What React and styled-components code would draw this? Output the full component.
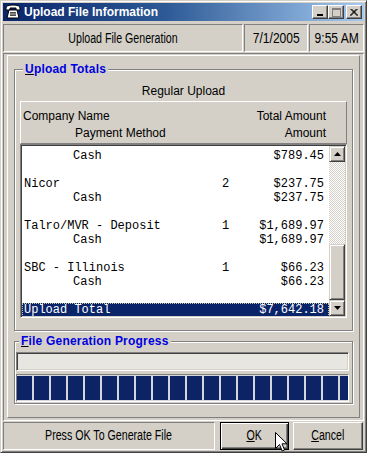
import React from "react";
import styled, { createGlobalStyle } from "styled-components";

const GlobalStyle = createGlobalStyle`
  html, body {
    margin: 0;
    padding: 0;
    background: #d4d0c8;
  }
  * {
    box-sizing: border-box;
  }
`;

const Window = styled.div`
  position: relative;
  width: 367px;
  height: 453px;
  display: flex;
  flex-direction: column;
  padding: 2px;
  background: #d4d0c8;
  border: 1px solid;
  border-color: #d4d0c8 #404040 #404040 #d4d0c8;
  box-shadow: inset 1px 1px #fff, inset -1px -1px #808080;
  font-family: "Liberation Sans", Arial, sans-serif;
  overflow: hidden;
`;

const TitleBar = styled.div`
  height: 18px;
  flex: none;
  display: flex;
  align-items: center;
  padding: 0 2px 0 2px;
  background: linear-gradient(90deg, #0a246a 0%, #2d5a96 45%, #a6caf0 100%);
  color: #fff;
`;

const TitleText = styled.span`
  margin-left: 3px;
  font-size: 12px;
  font-weight: bold;
  flex: 1;
`;

const TitleButton = styled.div`
  width: 16px;
  height: 14px;
  margin-left: ${(p) => (p.$gap ? "2px" : "0")};
  background: #d4d0c8;
  border: 1px solid;
  border-color: #fff #404040 #404040 #fff;
  box-shadow: inset -1px -1px #808080;
  display: flex;
  align-items: center;
  justify-content: center;
`;

// Arial Narrow look: the sans face squeezed sideways
const Narrow = styled.span`
  display: inline-block;
  white-space: nowrap;
  font-size: 14px;
  transform: scaleX(${(p) => p.$scale || 0.76});
`;

const HeaderRow = styled.div`
  margin-top: 3px;
  height: 28px;
  flex: none;
  display: grid;
  grid-template-columns: 240px 64px 55px;
  gap: 1px;
`;

const HeaderCell = styled.div`
  border: 1px solid;
  border-color: #808080 #fff #fff #808080;
  display: flex;
  align-items: center;
  justify-content: center;
  padding-bottom: 1px;
  color: #000;
`;

const Frame = styled.div`
  flex: 1;
  margin-top: 1px;
  display: flex;
  padding: 1px 3px 2px 3px;
  border: 1px solid;
  border-color: #808080 #fff #fff #808080;
`;

const Panel = styled.div`
  flex: 1;
  min-width: 0;
  display: flex;
  flex-direction: column;
  padding: 6px;
  border: 1px solid;
  border-color: #fff #808080 #808080 #fff;
`;

const GroupBox = styled.fieldset`
  margin: ${(p) => p.$top || "0"} 0 0 0;
  padding: ${(p) => p.$pad};
  min-width: 0;
  min-inline-size: 0;
  border: 1px solid #808080;
  box-shadow: inset 1px 1px #fff, 1px 1px #fff;
  display: flex;
  flex-direction: column;
`;

const Legend = styled.legend`
  margin-left: 3px;
  padding: 0 2px;
  background: #d4d0c8;
  color: #0000e0;
  font-size: 12px;
  font-weight: bold;
  line-height: 14px;
  letter-spacing: 0.2px;

  u {
    text-decoration-color: #000;
  }
`;

const SubTitle = styled.div`
  padding: 8px 0 3px;
  line-height: 14px;
  font-size: 12px;
  text-align: center;
  color: #000;
`;

const ColumnHeader = styled.div`
  height: 43px;
  padding: 7px 20px 0 2px;
  display: flex;
  flex-direction: column;
  gap: 3px;
  border: 1px solid;
  border-color: #fff #808080 #808080 #fff;
  font-size: 12px;
  line-height: 14px;
  color: #000;
`;

const HeaderLine = styled.div`
  display: flex;
  justify-content: space-between;
  padding-left: ${(p) => p.$indent || "0"};
`;

const ListBox = styled.div`
  height: 174px;
  display: flex;
  border: 1px solid;
  border-color: #808080 #fff #fff #808080;
  box-shadow: inset 1px 1px #404040, inset -1px -1px #d4d0c8;
  padding: 1px;
  background: #fff;
`;

const ListBody = styled.div`
  flex: 1;
  min-width: 0;
  padding-top: 3px;
  overflow: hidden;
  font-family: "Liberation Mono", "Courier New", monospace;
  font-size: 12px;
  color: #000;
`;

const Row = styled.div`
  height: 14px;
  line-height: 14px;
  display: grid;
  grid-template-columns: 198px 20px 82px;
  padding-left: 2px;
  white-space: pre;
  background: ${(p) => (p.$selected ? "#0a246a" : "transparent")};
  color: ${(p) => (p.$selected ? "#fff" : "#000")};
  outline: ${(p) => (p.$selected ? "1px dotted #c8c8a0" : "none")};
  outline-offset: -1px;
`;

const NameCell = styled.span`
  padding-left: ${(p) => (p.$indent ? "49px" : "0")};
`;

const AmountCell = styled.span`
  text-align: right;
`;

const ScrollBar = styled.div`
  width: 16px;
  flex: none;
  display: flex;
  flex-direction: column;
`;

const ScrollButton = styled.div`
  height: 16px;
  flex: none;
  background: #d4d0c8;
  border: 1px solid;
  border-color: #d4d0c8 #404040 #404040 #d4d0c8;
  box-shadow: inset 1px 1px #fff, inset -1px -1px #808080;
  display: flex;
  align-items: center;
  justify-content: center;
`;

const Track = styled.div`
  flex: 1;
  background: repeating-conic-gradient(#d4d0c8 0 25%, #fff 0 50%) 0 0 / 2px 2px;
`;

const Thumb = styled.div`
  height: 56px;
  flex: none;
  background: #d4d0c8;
  border: 1px solid;
  border-color: #d4d0c8 #404040 #404040 #d4d0c8;
  box-shadow: inset 1px 1px #fff, inset -1px -1px #808080;
`;

const TextBox = styled.div`
  margin-top: 4px;
  height: 19px;
  border: 1px solid;
  border-color: #808080 #fff #fff #808080;
  box-shadow: inset 1px 1px #404040, inset -1px -1px #d4d0c8;
  background: #e8e6e1;
`;

const ProgressBar = styled.div`
  margin-top: 3px;
  height: 28px;
  min-width: 0;
  display: flex;
  gap: 2px;
  padding: 1px 0;
  overflow: hidden;
  border: 1px solid;
  border-color: #808080 #fff #fff #808080;
  background: #d4d6dc;
`;

const Block = styled.div`
  width: 15px;
  flex: none;
  background: #0c2466;
`;

const StatusBar = styled.div`
  margin-top: 1px;
  height: 28px;
  flex: none;
  display: flex;
`;

const StatusPanel = styled.div`
  width: 212px;
  border: 1px solid;
  border-color: #808080 #fff #fff #808080;
  display: flex;
  align-items: center;
  justify-content: center;
  padding-bottom: 2px;
  color: #000;
`;

const Button = styled.div`
  width: ${(p) => p.$w};
  margin-left: ${(p) => p.$ml};
  background: #d4d0c8;
  border: 1px solid;
  border-color: ${(p) => (p.$default ? "#000" : "#fff #404040 #404040 #fff")};
  box-shadow: ${(p) =>
    p.$default
      ? "inset 1px 1px #fff, inset -1px -1px #404040, inset -2px -2px #808080"
      : "inset -1px -1px #808080"};
  display: flex;
  align-items: center;
  justify-content: center;
  padding-bottom: 3px;
  color: #000;
`;

const Cursor = styled.svg`
  position: absolute;
  left: 274px;
  top: 431px;
`;

const rows = [
  { name: "Cash", amt: "$789.45", indent: true },
  {},
  { name: "Nicor", count: "2", amt: "$237.75" },
  { name: "Cash", amt: "$237.75", indent: true },
  {},
  { name: "Talro/MVR - Deposit", count: "1", amt: "$1,689.97" },
  { name: "Cash", amt: "$1,689.97", indent: true },
  {},
  { name: "SBC - Illinois", count: "1", amt: "$66.23" },
  { name: "Cash", amt: "$66.23", indent: true },
  {},
  { name: "Upload Total", amt: "$7,642.18", selected: true },
];

function PhoneIcon() {
  return (
    <svg width="16" height="16" viewBox="0 0 16 16">
      <path d="M1 4 Q1 1 8 1 Q15 1 15 4 L15 6 L11 6 L11 4 L5 4 L5 6 L1 6 Z" fill="#fff" stroke="#000" strokeWidth="1" />
      <path d="M4 6 L12 6 L14 14 L2 14 Z" fill="#fff" stroke="#000" strokeWidth="1" />
      <rect x="5" y="8" width="6" height="4" fill="#000" />
      <path d="M6 8v4M8 8v4M10 8v4M5 10h6" stroke="#fff" strokeWidth="0.6" />
    </svg>
  );
}

function App() {
  return (
    <>
      <GlobalStyle />
      <Window>
        <TitleBar>
          <PhoneIcon />
          <TitleText>Upload File Information</TitleText>
          <TitleButton>
            <svg width="8" height="8" viewBox="0 0 8 8">
              <rect x="1" y="6" width="6" height="2" fill="#000" />
            </svg>
          </TitleButton>
          <TitleButton>
            <svg width="9" height="9" viewBox="0 0 9 9">
              <rect x="0.5" y="0.5" width="8" height="8" fill="none" stroke="#808080" />
              <rect x="0" y="0" width="9" height="2" fill="#808080" />
            </svg>
          </TitleButton>
          <TitleButton $gap>
            <svg width="8" height="7" viewBox="0 0 8 7">
              <path d="M0.5 0 L7.5 7 M1.5 0 L8 6.5 M7.5 0 L0.5 7 M6.5 0 L0 6.5" stroke="#000" strokeWidth="1" />
            </svg>
          </TitleButton>
        </TitleBar>

        <HeaderRow>
          <HeaderCell>
            <Narrow>Upload File Generation</Narrow>
          </HeaderCell>
          <HeaderCell>
            <Narrow $scale={0.86}>7/1/2005</Narrow>
          </HeaderCell>
          <HeaderCell>
            <Narrow $scale={0.86}>9:55 AM</Narrow>
          </HeaderCell>
        </HeaderRow>

        <Frame>
          <Panel>
            <GroupBox $pad="0 5px 12px 5px">
              <Legend>
                <u>U</u>pload Totals
              </Legend>
              <SubTitle>Regular Upload</SubTitle>
              <ColumnHeader>
                <HeaderLine>
                  <span>Company Name</span>
                  <span>Total Amount</span>
                </HeaderLine>
                <HeaderLine $indent="52px">
                  <span>Payment Method</span>
                  <span>Amount</span>
                </HeaderLine>
              </ColumnHeader>
              <ListBox>
                <ListBody>
                  {rows.map((r, i) => (
                    <Row key={i} $selected={r.selected}>
                      <NameCell $indent={r.indent}>{r.name || ""}</NameCell>
                      <span>{r.count || ""}</span>
                      <AmountCell>{r.amt || ""}</AmountCell>
                    </Row>
                  ))}
                </ListBody>
                <ScrollBar>
                  <ScrollButton>
                    <svg width="7" height="4" viewBox="0 0 7 4">
                      <path d="M3.5 0 L7 4 L0 4 Z" fill="#000" />
                    </svg>
                  </ScrollButton>
                  <Track />
                  <Thumb />
                  <ScrollButton>
                    <svg width="7" height="4" viewBox="0 0 7 4">
                      <path d="M0 0 L7 0 L3.5 4 Z" fill="#000" />
                    </svg>
                  </ScrollButton>
                </ScrollBar>
              </ListBox>
            </GroupBox>

            <GroupBox $top="3px" $pad="0 3px 1px 1px">
              <Legend>
                <u>F</u>ile Generation Progress
              </Legend>
              <TextBox />
              <ProgressBar>
                {Array.from({ length: 20 }, (_, i) => (
                  <Block key={i} />
                ))}
              </ProgressBar>
            </GroupBox>
          </Panel>
        </Frame>

        <StatusBar>
          <StatusPanel>
            <Narrow>Press OK To Generate File</Narrow>
          </StatusPanel>
          <Button $w="69px" $ml="5px" $default>
            <Narrow>
              <u>O</u>K
            </Narrow>
          </Button>
          <Button $w="70px" $ml="4px">
            <Narrow>
              <u>C</u>ancel
            </Narrow>
          </Button>
        </StatusBar>

        <Cursor width="13" height="21" viewBox="0 0 13 21">
          <path
            d="M0.5 0.5 L0.5 16.5 L4.5 12.5 L7.2 19 L9.6 18 L7 11.8 L12 11.8 Z"
            fill="#fff"
            stroke="#000"
            strokeWidth="1"
          />
        </Cursor>
      </Window>
    </>
  );
}

export default App;
